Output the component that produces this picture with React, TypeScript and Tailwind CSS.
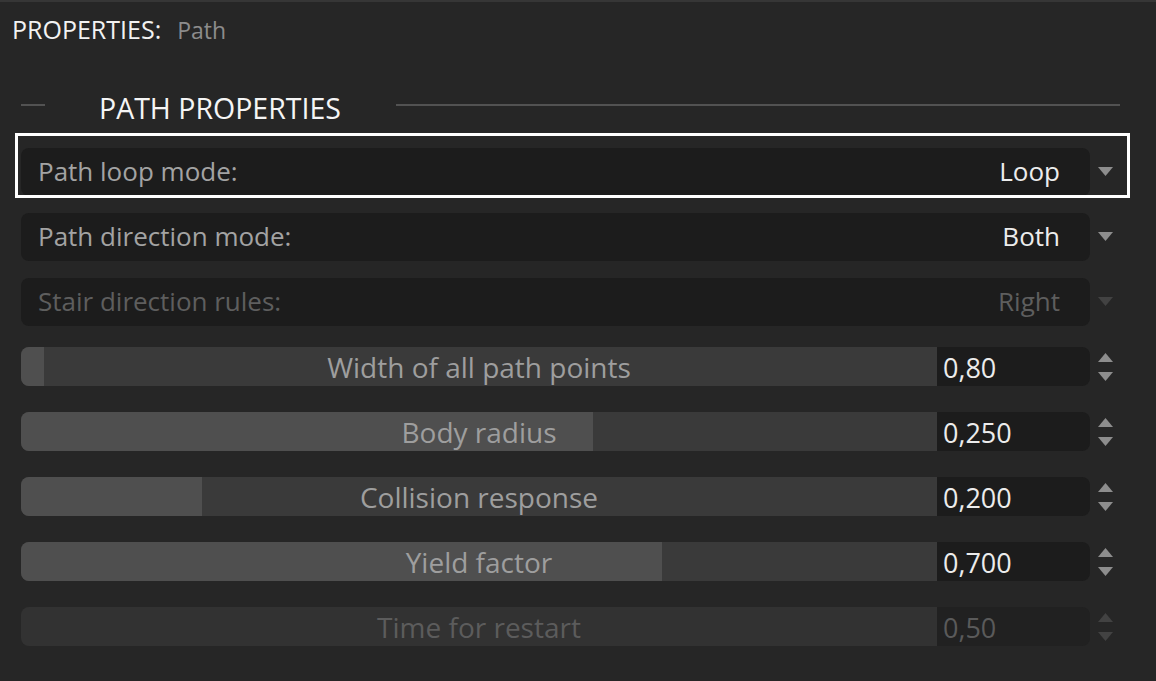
const font = { fontFamily: '"Open Sans", "Noto Sans", sans-serif' };

type Slider = { label: string; value: string; fill: number; disabled?: boolean };

const dropdowns = [
  { label: "Path loop mode:", value: "Loop" },
  { label: "Path direction mode:", value: "Both" },
  { label: "Stair direction rules:", value: "Right", disabled: true },
];

const sliders: Slider[] = [
  { label: "Width of all path points", value: "0,80", fill: 23 },
  { label: "Body radius", value: "0,250", fill: 572 },
  { label: "Collision response", value: "0,200", fill: 181 },
  { label: "Yield factor", value: "0,700", fill: 641 },
  { label: "Time for restart", value: "0,50", fill: 0, disabled: true },
];

const Down = ({ dim }: { dim?: boolean }) => (
  <svg width="15" height="9" viewBox="0 0 15 9">
    <path d="M0 0 H15 L7.5 9 Z" fill={dim ? "#424242" : "#8d8d8d"} />
  </svg>
);

const Up = ({ dim }: { dim?: boolean }) => (
  <svg width="15" height="9" viewBox="0 0 15 9">
    <path d="M7.5 0 L15 9 H0 Z" fill={dim ? "#424242" : "#8d8d8d"} />
  </svg>
);

const App = () => {
  return (
    <div
      className="w-[1156px] h-[681px] bg-[#262626] border-t-2 border-[#363636] text-[#9c9c9c] overflow-hidden"
      style={font}
    >
      {/* Kopf */}
      <div className="h-[56px] flex items-center pl-[12px] gap-[16px] text-[25px]">
        <span className="text-[#f2f2f2]">PROPERTIES:</span>
        <span className="text-[#8c8c8c] text-[23px]">Path</span>
      </div>

      {/* Abschnitt */}
      <div className="h-[81px] pt-[19px] flex items-center pl-[21px] pr-[36px]">
        <div className="w-[24px] h-[2px] bg-[#525252] -mt-[6px]" />
        <span className="ml-[54px] text-[28.5px] text-[#f5f5f5]">PATH PROPERTIES</span>
        <div className="flex-1 ml-[55px] h-[2px] bg-[#525252] -mt-[6px]" />
      </div>

      {/* Auswahlfelder */}
      {dropdowns.map((d, i) => (
        <div key={d.label} className="relative h-[65px] flex items-center pl-[21px]">
          {i === 0 && (
            <div className="absolute left-[15px] top-[-6px] w-[1115px] h-[65px] border-[3px] border-white" />
          )}
          <div className="w-[1069px] h-[48px] rounded-[8px] bg-[#1c1c1c] flex items-center justify-between pl-[17px] pr-[30px] text-[26px]">
            <span className={d.disabled ? "text-[#5e5e5e]" : "text-[#a3a3a3]"}>{d.label}</span>
            <span className={d.disabled ? "text-[#5e5e5e]" : "text-[#ececec]"}>{d.value}</span>
          </div>
          <div className="w-[31px] flex justify-center">
            <Down dim={d.disabled} />
          </div>
        </div>
      ))}

      {/* Regler */}
      {sliders.map((s) => (
        <div key={s.label} className="h-[65px] flex items-center pl-[21px]">
          <div
            className={`relative w-[916px] h-[39px] rounded-l-[8px] overflow-hidden ${
              s.disabled ? "bg-[#323232]" : "bg-[#3a3a3a]"
            }`}
          >
            {s.fill > 0 && (
              <div className="absolute left-0 top-0 h-full bg-[#4f4f4f]" style={{ width: s.fill }} />
            )}
            <div className="absolute inset-0 flex items-center justify-center text-[28px]">
              <span className={s.disabled ? "text-[#5c5c5c]" : "text-[#9e9e9e]"}>{s.label}</span>
            </div>
          </div>
          <div
            className={`w-[153px] h-[39px] rounded-r-[8px] flex items-center pl-[6px] pt-[3px] text-[27px] ${
              s.disabled ? "bg-[#212121] text-[#5a5a5a]" : "bg-[#1c1c1c] text-[#ececec]"
            }`}
          >
            {s.value}
          </div>
          <div className="w-[31px] flex flex-col items-center gap-[10px]">
            <Up dim={s.disabled} />
            <Down dim={s.disabled} />
          </div>
        </div>
      ))}
    </div>
  );
};

export default App;
